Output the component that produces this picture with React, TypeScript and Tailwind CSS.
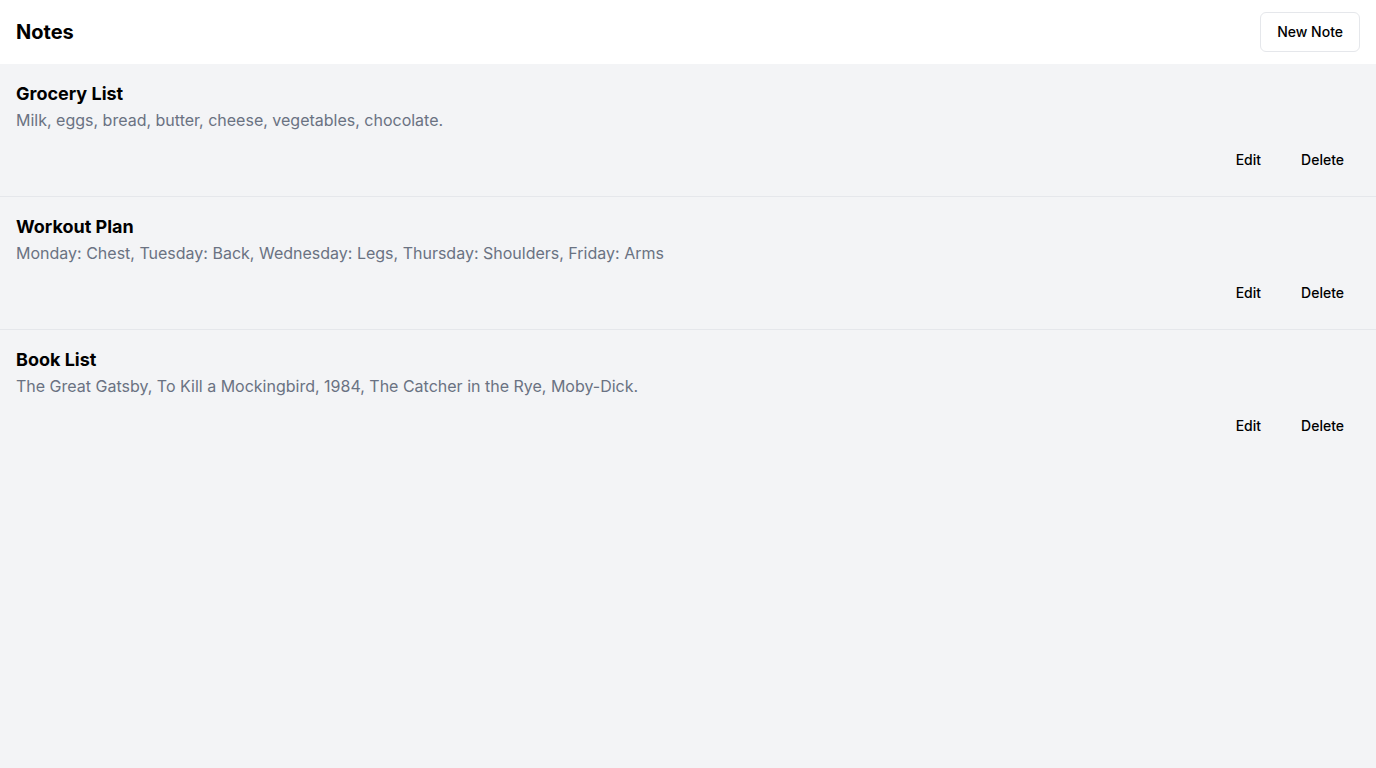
const notes = [
    { id: 1, title: 'Grocery List', content: 'Milk, eggs, bread, butter, cheese, vegetables, chocolate.' },
    { id: 2, title: 'Workout Plan', content: 'Monday: Chest, Tuesday: Back, Wednesday: Legs, Thursday: Shoulders, Friday: Arms' },
    { id: 3, title: 'Book List', content: 'The Great Gatsby, To Kill a Mockingbird, 1984, The Catcher in the Rye, Moby-Dick.' },
];

export default function App() {
    return (
        <div className="min-h-screen w-full bg-gray-100 text-black flex flex-col font-['Inter',sans-serif]">
            <header className="h-16 bg-white flex items-center justify-between px-4">
                <h1 className="text-xl font-bold">Notes</h1>
                <button className="h-10 px-4 rounded-md border border-gray-200 bg-white text-sm font-medium">
                    New Note
                </button>
            </header>

            <main className="flex flex-col divide-y divide-gray-200">
                {notes.map((note) => (
                    <div key={note.id} className="p-4">
                        <h2 className="text-lg font-bold">{note.title}</h2>
                        <p className="text-base text-gray-500">{note.content}</p>
                        <div className="mt-2 flex justify-end gap-2">
                            <button className="h-10 px-4 rounded-md text-sm font-medium">Edit</button>
                            <button className="h-10 px-4 rounded-md text-sm font-medium">Delete</button>
                        </div>
                    </div>
                ))}
            </main>
        </div>
    );
}
